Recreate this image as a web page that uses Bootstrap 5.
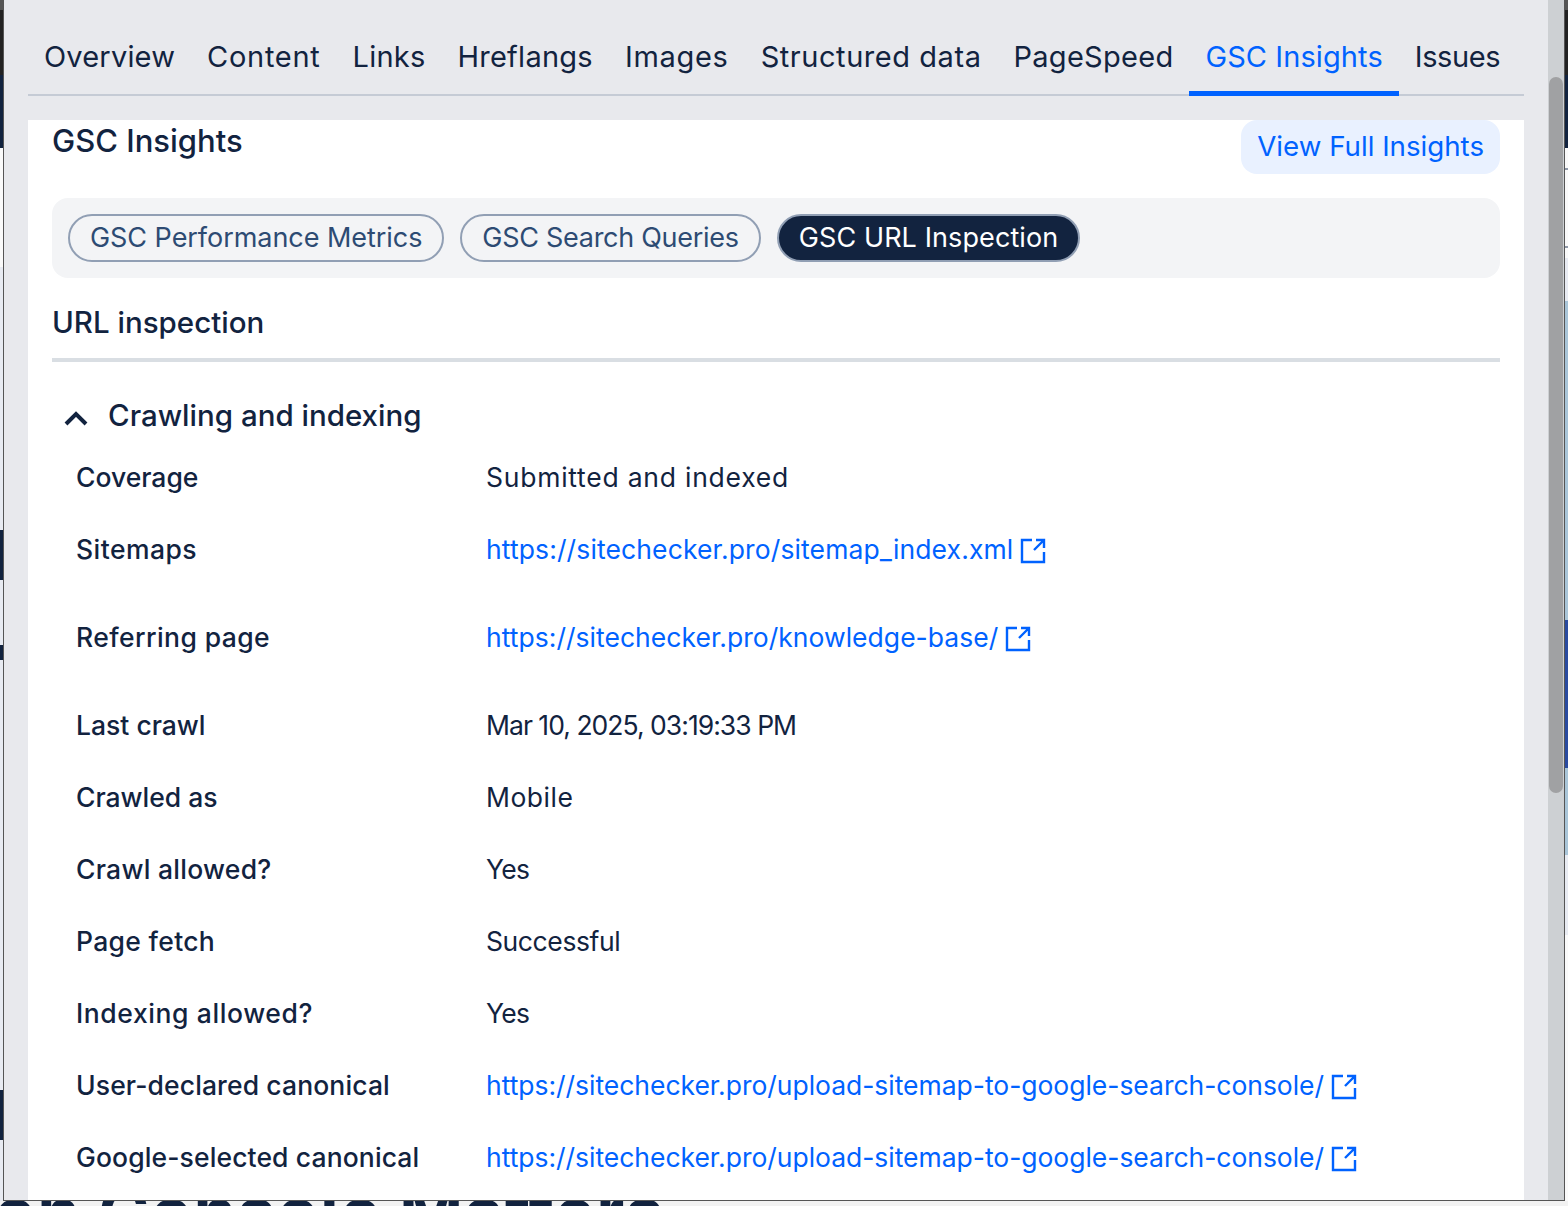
<!doctype html>
<html lang="en"><head><meta charset="utf-8">
<link href="https://cdn.jsdelivr.net/npm/bootstrap@5.3.0/dist/css/bootstrap.min.css" rel="stylesheet">
<style>
html,body{height:1206px;overflow:hidden;background:#fff}
body{font-family:Inter,"Liberation Sans",sans-serif;color:#12233f;position:relative}
.strip{position:absolute;top:0;height:1206px;overflow:hidden}
.strip-l{left:0;width:3px;background:#e8ebf2}
.strip-r{left:1565px;width:3px;background:#e8ebf2}
.bit{position:absolute;left:0;width:100%}
.c-top{top:0;height:10px;background:#555}
.c-dark{top:10px;height:65px;background:#222}
.c-navy{top:75px;height:73px;background:#12233f}
.c-white{top:148px;height:119px;background:#fafafa}
.c-a{top:530px;height:50px;background:#12233f}
.c-b{top:645px;height:15px;background:#12233f}
.c-c{top:1090px;height:50px;background:#12233f}
.r-white{top:148px;height:110px;background:#fafafa}
.r-l1{top:168px;height:2px;background:#8f98a8}
.r-l2{top:246px;height:2px;background:#8f98a8}
.r-sky{top:301px;height:554px;background:#a9c5d8}
.r-blue{top:620px;height:148px;background:#2a4ba0}
.r-white2{top:935px;height:271px;background:#fafafa}
.bottom-clip{position:absolute;left:0;top:1201px;width:1568px;height:5px;overflow:hidden;background:#f2f2f2}
.bg-heading{font-size:69px;font-weight:700;line-height:69px;margin-top:-23px;margin-left:-6px;color:#12233f;white-space:nowrap;letter-spacing:.9px}
.dialog{position:absolute;left:3px;top:-1px;width:1562px;height:1202px;background:#e8e9ed;border:1px solid #555;border-top:0;display:flex;overflow:hidden}
.dialog-main{width:1544px;padding:1px 24px 0 24px;flex:none}
.dialog-track{width:16px;background:#cdd0d3;flex:none;position:relative}
.dialog-thumb{position:absolute;left:1px;top:78px;width:14px;height:716px;background:#a0a1a3;border-radius:7px}
.tabs-row{height:96px;border-bottom:2px solid #c5cbd5;margin-bottom:24px}
.tab-item{height:96px;padding:40px 16px 0;font-size:29px;line-height:34px;color:#12233f;text-decoration:none;margin-bottom:-2px;white-space:nowrap}
.tab-item.on{color:#0062ff;border-bottom:5px solid #0062ff}
.ts1{letter-spacing:.18px}.ts2{letter-spacing:.72px}.ts3{letter-spacing:.22px}.ts4{letter-spacing:.26px}.ts5{letter-spacing:.7px}.ts6{letter-spacing:.55px}.ts7{letter-spacing:.28px}.ts8{letter-spacing:.09px}.ts9{letter-spacing:-.4px}
.panel-white{background:#fff;height:1082px;padding:0 24px;overflow:hidden}
.panel-title{font-size:31px;line-height:42px;font-weight:500;margin:0}
.full-btn{background:#e9f1ff;color:#0062ff;font-size:27.7px;line-height:52px;height:54px;padding:0 16px;border-radius:16px;text-decoration:none;white-space:nowrap}
.pill-tray{background:#f3f4f6;border-radius:16px;padding:16px;margin-top:24px;height:80px;gap:16px}
.pill-opt{height:48px;border:2px solid #919fb4;border-radius:24px;padding:0 20px;font-size:27px;line-height:44px;color:#2d4b73;white-space:nowrap}
.pill-opt.on{background:#12233f;color:#fff}
.ps1{letter-spacing:-.05px}.ps2{letter-spacing:-.28px}.ps3{letter-spacing:.1px}
.sect-title{font-size:29.5px;line-height:40px;font-weight:450;margin:24px 0 0;padding-bottom:16px;border-bottom:4px solid #d9dee3}
.acc-head{margin-top:33px;height:40px;font-size:29.5px;line-height:40px;font-weight:450;padding-left:11px;gap:19px}
.acc-chev{margin-top:6px}
.info-row{display:flex;font-size:26.5px;line-height:36px;padding:0 24px}
.info-key{width:410px;flex:none;font-weight:500;white-space:nowrap}
.info-val{white-space:nowrap}
.gap-s{margin-top:36px}
.gap-l{margin-top:52px}
.info-row a{color:#0062ff;text-decoration:none}
.ext-ico{width:26px;height:26px;margin-left:7px;vertical-align:-5px}
.vs1{letter-spacing:.76px}.vs2{letter-spacing:.12px}.vs3{letter-spacing:-.97px}.vs4{letter-spacing:.5px}.vs5{letter-spacing:-.67px}.vs6{letter-spacing:-.4px}.vs7{letter-spacing:-.03px}.vs8{letter-spacing:.03px}
.ks1{letter-spacing:.42px}.ks2{letter-spacing:.12px}.ks3{letter-spacing:.45px}.ks4{letter-spacing:.27px}.ks5{letter-spacing:.32px}.ks6{letter-spacing:.6px}
</style></head><body>
<div class="strip strip-l">
 <div class="bit c-top"></div><div class="bit c-dark"></div><div class="bit c-navy"></div><div class="bit c-white"></div><div class="bit c-a"></div><div class="bit c-b"></div><div class="bit c-c"></div>
</div>
<div class="strip strip-r">
 <div class="bit c-top"></div><div class="bit c-dark"></div><div class="bit c-navy"></div><div class="bit r-white"></div><div class="bit r-l1"></div><div class="bit r-l2"></div><div class="bit r-sky"></div><div class="bit r-blue"></div><div class="bit r-white2"></div>
</div>
<div class="bottom-clip"><div class="bg-heading">on Console Matters</div></div>
<div class="dialog">
 <div class="dialog-main">
  <nav class="tabs-row d-flex">
   <a class="tab-item ts1" href="#">Overview</a><a class="tab-item ts2" href="#">Content</a><a class="tab-item ts3" href="#">Links</a><a class="tab-item ts4" href="#">Hreflangs</a><a class="tab-item ts5" href="#">Images</a><a class="tab-item ts6" href="#">Structured data</a><a class="tab-item ts7" href="#">PageSpeed</a><a class="tab-item on ts8" href="#">GSC Insights</a><a class="tab-item ts9" href="#">Issues</a>
  </nav>
  <div class="panel-white">
   <div class="d-flex justify-content-between align-items-start">
    <h2 class="panel-title">GSC Insights</h2>
    <a class="full-btn" href="#">View Full Insights</a>
   </div>
   <div class="pill-tray d-flex">
    <div class="pill-opt ps1">GSC Performance Metrics</div>
    <div class="pill-opt ps2">GSC Search Queries</div>
    <div class="pill-opt on ps3">GSC URL Inspection</div>
   </div>
   <h3 class="sect-title">URL inspection</h3>
   <div class="acc-head d-flex align-items-center">
    <svg class="acc-chev" width="26" height="16" viewBox="0 0 26 16" fill="none"><path d="M3 14L13 4l10 10" stroke="#12233f" stroke-width="4"/></svg>
    <span>Crawling and indexing</span>
   </div>
   <div class="info-row" style="margin-top:24px"><div class="info-key">Coverage</div><div class="info-val vs1">Submitted and indexed</div></div>
   <div class="info-row gap-s"><div class="info-key ks3">Sitemaps</div><div class="info-val vs2"><a href="#">https://sitechecker.pro/sitemap_index.xml<svg class="ext-ico" viewBox="0 0 26 26" fill="none" stroke="#0062ff" stroke-width="2.4"><path d="M12 2H2v22h22V14M14 12L24 2M16 2h8v8"/></svg></a></div></div>
   <div class="info-row gap-l"><div class="info-key ks1">Referring page</div><div class="info-val vs8"><a href="#">https://sitechecker.pro/knowledge-base/<svg class="ext-ico" viewBox="0 0 26 26" fill="none" stroke="#0062ff" stroke-width="2.4"><path d="M12 2H2v22h22V14M14 12L24 2M16 2h8v8"/></svg></a></div></div>
   <div class="info-row gap-l"><div class="info-key">Last crawl</div><div class="info-val vs3">Mar 10, 2025, 03:19:33 PM</div></div>
   <div class="info-row gap-s"><div class="info-key">Crawled as</div><div class="info-val vs4">Mobile</div></div>
   <div class="info-row gap-s"><div class="info-key ks4">Crawl allowed?</div><div class="info-val vs5">Yes</div></div>
   <div class="info-row gap-s"><div class="info-key ks5">Page fetch</div><div class="info-val vs6">Successful</div></div>
   <div class="info-row gap-s"><div class="info-key ks6">Indexing allowed?</div><div class="info-val vs5">Yes</div></div>
   <div class="info-row gap-s"><div class="info-key ks2">User-declared canonical</div><div class="info-val vs7"><a href="#">https://sitechecker.pro/upload-sitemap-to-google-search-console/<svg class="ext-ico" viewBox="0 0 26 26" fill="none" stroke="#0062ff" stroke-width="2.4"><path d="M12 2H2v22h22V14M14 12L24 2M16 2h8v8"/></svg></a></div></div>
   <div class="info-row gap-s"><div class="info-key ks2">Google-selected canonical</div><div class="info-val vs7"><a href="#">https://sitechecker.pro/upload-sitemap-to-google-search-console/<svg class="ext-ico" viewBox="0 0 26 26" fill="none" stroke="#0062ff" stroke-width="2.4"><path d="M12 2H2v22h22V14M14 12L24 2M16 2h8v8"/></svg></a></div></div>
  </div>
 </div>
 <div class="dialog-track"><div class="dialog-thumb"></div></div>
</div>
<script src="https://cdn.jsdelivr.net/npm/bootstrap@5.3.0/dist/js/bootstrap.bundle.min.js"></script>
</body></html>
